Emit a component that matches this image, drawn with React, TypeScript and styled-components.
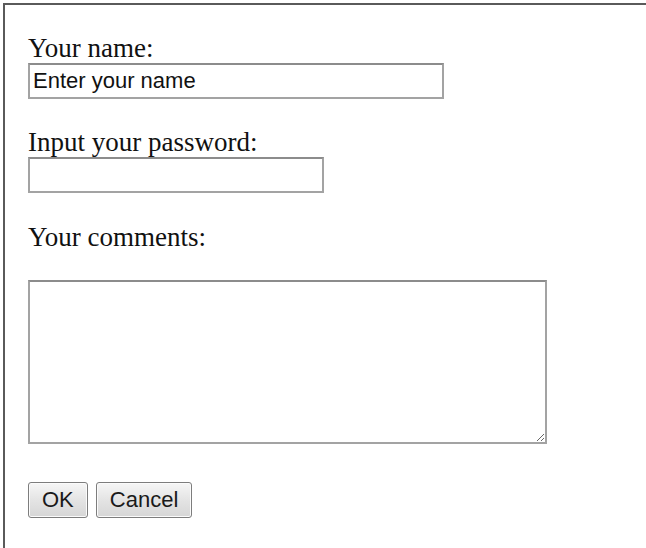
import React from "react"
import styled, { createGlobalStyle } from "styled-components"

const GlobalStyle = createGlobalStyle`
  html, body {
    margin: 0;
    padding: 0;
    background: #ffffff;
  }
`

const Frame = styled.form`
  box-sizing: border-box;
  margin: 3px 0 0 3px;
  min-height: 545px;
  border-top: 2px solid #5a5a5a;
  border-left: 2px solid #5a5a5a;
  padding: 28px 0 0 23px;
  display: flex;
  flex-direction: column;
  align-items: flex-start;
  font-family: "Liberation Serif", "Times New Roman", serif;
  color: #111;
`

const Field = styled.div<{ $gap?: number }>`
  display: flex;
  flex-direction: column;
  align-items: flex-start;
  margin-bottom: ${p => p.$gap ?? 28}px;
`

const Label = styled.label<{ $space?: number }>`
  font-size: 27px;
  line-height: 30px;
  margin-bottom: ${p => p.$space ?? 0}px;
`

const TextInput = styled.input<{ $width: number }>`
  box-sizing: border-box;
  width: ${p => p.$width}px;
  height: 36px;
  margin: 0;
  padding: 0 3px;
  border: 2px solid #a3a3a3;
  border-top-color: #8c8c8c;
  border-radius: 0;
  background: #fff;
  font-family: "Liberation Sans", Arial, sans-serif;
  font-size: 22px;
  color: #111;
  outline: none;
`

const Comments = styled.textarea`
  box-sizing: border-box;
  width: 519px;
  height: 164px;
  margin: 0;
  padding: 4px;
  border: 2px solid #a3a3a3;
  border-top-color: #8c8c8c;
  border-radius: 0;
  font-family: "Liberation Sans", Arial, sans-serif;
  font-size: 22px;
  outline: none;
`

const Buttons = styled.div`
  display: flex;
  gap: 8px;
  margin-top: 10px;
`

const Button = styled.button`
  height: 36px;
  margin: 0;
  padding: 0 13px;
  border: 1px solid #7d7d7d;
  border-radius: 3px;
  background: linear-gradient(#f6f6f6, #e4e4e4 50%, #d6d6d6);
  box-shadow: inset 0 0 0 1px #fbfbfb;
  font-family: "Liberation Sans", Arial, sans-serif;
  font-size: 22px;
  color: #1a1a1a;
`

export default function App() {
  return (
    <>
      <GlobalStyle />
      <Frame onSubmit={e => e.preventDefault()}>
        <Field>
          <Label htmlFor="name">Your name:</Label>
          <TextInput id="name" type="text" $width={416} defaultValue="Enter your name" />
        </Field>
        <Field $gap={29}>
          <Label htmlFor="password">Input your password:</Label>
          <TextInput id="password" type="password" $width={296} />
        </Field>
        <Field>
          <Label htmlFor="comments" $space={28}>Your comments:</Label>
          <Comments id="comments" />
        </Field>
        <Buttons>
          <Button type="submit">OK</Button>
          <Button type="button">Cancel</Button>
        </Buttons>
      </Frame>
    </>
  )
}
